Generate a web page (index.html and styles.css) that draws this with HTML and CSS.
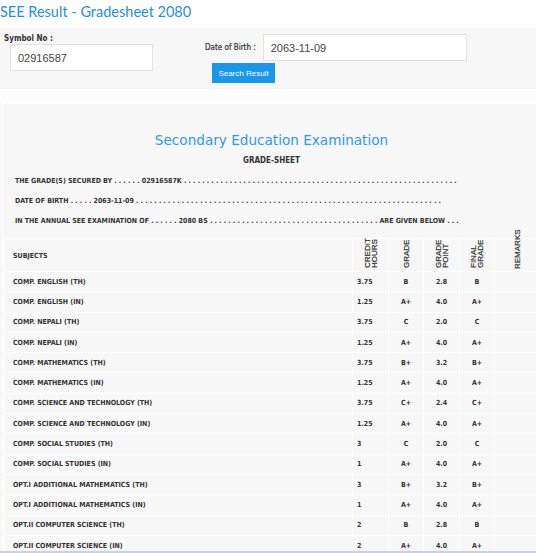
FILE: index.html
```html
<!DOCTYPE html>
<html lang="en">
<head>
<meta charset="utf-8">
<title>SEE Result - Gradesheet 2080</title>
<link rel="stylesheet" href="styles.css">
</head>
<body>
<h1 class="page-title">SEE Result - Gradesheet 2080</h1>
<form class="search-panel">
  <div class="field symbol">
    <label class="label">Symbol No :</label>
    <input class="input input-symbol" type="text" value="02916587">
  </div>
  <div class="field dob">
    <div class="dob-row">
      <label class="label">Date of Birth :</label>
      <input class="input input-dob" type="text" value="2063-11-09">
    </div>
    <button class="btn" type="button">Search Result</button>
  </div>
</form>
<div class="spacer"></div>
<section class="sheet">
  <h2 class="sheet-title">Secondary Education Examination</h2>
  <h3 class="sheet-sub">GRADE-SHEET</h3>
  <p class="info">THE GRADE(S) SECURED BY . . . . . . 02916587K . . . . . . . . . . . . . . . . . . . . . . . . . . . . . . . . . . . . . . . . . . . . . . . . . . . . . . . . . . . .</p>
  <p class="info">DATE OF BIRTH . . . . . 2063-11-09 . . . . . . . . . . . . . . . . . . . . . . . . . . . . . . . . . . . . . . . . . . . . . . . . . . . . . . . . . . . . . . . . . . .</p>
  <p class="info">IN THE ANNUAL SEE EXAMINATION OF . . . . . . 2080 BS . . . . . . . . . . . . . . . . . . . . . . . . . . . . . . . . . . . . . ARE GIVEN BELOW . . .</p>
  <table class="grades">
    <colgroup>
      <col class="c-sub"><col class="c-num"><col class="c-num2"><col class="c-num"><col class="c-num2"><col class="c-rem">
    </colgroup>
    <thead>
      <tr>
        <th class="th-sub">SUBJECTS</th>
        <th><span class="vert">CREDIT<br>HOURS</span></th>
        <th><span class="vert">GRADE</span></th>
        <th><span class="vert">GRADE<br>POINT</span></th>
        <th><span class="vert">FINAL<br>GRADE</span></th>
        <th><span class="vert rem">REMARKS</span></th>
      </tr>
    </thead>
    <tbody>
      <tr><td>COMP. ENGLISH (TH)</td><td class="ch">3.75</td><td>B</td><td>2.8</td><td>B</td><td></td></tr>
      <tr><td>COMP. ENGLISH (IN)</td><td class="ch">1.25</td><td>A+</td><td>4.0</td><td>A+</td><td></td></tr>
      <tr><td>COMP. NEPALI (TH)</td><td class="ch">3.75</td><td>C</td><td>2.0</td><td>C</td><td></td></tr>
      <tr><td>COMP. NEPALI (IN)</td><td class="ch">1.25</td><td>A+</td><td>4.0</td><td>A+</td><td></td></tr>
      <tr><td>COMP. MATHEMATICS (TH)</td><td class="ch">3.75</td><td>B+</td><td>3.2</td><td>B+</td><td></td></tr>
      <tr><td>COMP. MATHEMATICS (IN)</td><td class="ch">1.25</td><td>A+</td><td>4.0</td><td>A+</td><td></td></tr>
      <tr><td>COMP. SCIENCE AND TECHNOLOGY (TH)</td><td class="ch">3.75</td><td>C+</td><td>2.4</td><td>C+</td><td></td></tr>
      <tr><td>COMP. SCIENCE AND TECHNOLOGY (IN)</td><td class="ch">1.25</td><td>A+</td><td>4.0</td><td>A+</td><td></td></tr>
      <tr><td>COMP. SOCIAL STUDIES (TH)</td><td class="ch">3</td><td>C</td><td>2.0</td><td>C</td><td></td></tr>
      <tr><td>COMP. SOCIAL STUDIES (IN)</td><td class="ch">1</td><td>A+</td><td>4.0</td><td>A+</td><td></td></tr>
      <tr><td>OPT.I ADDITIONAL MATHEMATICS (TH)</td><td class="ch">3</td><td>B+</td><td>3.2</td><td>B+</td><td></td></tr>
      <tr><td>OPT.I ADDITIONAL MATHEMATICS (IN)</td><td class="ch">1</td><td>A+</td><td>4.0</td><td>A+</td><td></td></tr>
      <tr><td>OPT.II COMPUTER SCIENCE (TH)</td><td class="ch">2</td><td>B</td><td>2.8</td><td>B</td><td></td></tr>
      <tr><td>OPT.II COMPUTER SCIENCE (IN)</td><td class="ch">2</td><td>A+</td><td>4.0</td><td>A+</td><td></td></tr>
    </tbody>
  </table>
</section>
<div class="window-edge"></div>
</body>
</html>
```
FILE: styles.css
```css
html, body {
  margin: 0;
  padding: 0;
  background: #ffffff;
  overflow: hidden;
}
body {
  font-family: "Liberation Sans", Arial, sans-serif;
  color: #333;
}
.page-title {
  margin: 0;
  height: 28px;
  padding: 3px 0 0 0;
  box-sizing: border-box;
  font-family: Lato, "DejaVu Sans", sans-serif;
  font-weight: normal;
  font-size: 14.5px;
  color: #1f8fe6;
  line-height: 18px;
}
.search-panel {
  margin: 0;
  height: 61px;
  background: #f7f7f7;
  display: flex;
  padding: 0 0 0 4px;
  box-sizing: border-box;
}
.label {
  font-family: "DejaVu Sans Condensed", "DejaVu Sans", sans-serif;
  font-weight: bold;
  font-size: 8px;
  color: #333;
}
.field.symbol {
  width: 201px;
  padding-top: 6px;
  display: flex;
  flex-direction: column;
  align-items: flex-start;
}
.field.symbol .label {
  line-height: 10px;
  height: 10px;
}
.input {
  font-family: "Liberation Sans", Arial, sans-serif;
  font-size: 11px;
  color: #444;
  background: #fff;
  border: 1px solid #e2e2da;
  box-sizing: border-box;
  height: 27px;
  padding: 0 0 0 7px;
  margin: 0;
  outline: none;
}
.input-symbol {
  width: 143px;
  margin: 0 0 0 6px;
}
.field.dob {
  padding-top: 6px;
  display: flex;
  flex-direction: column;
  align-items: flex-start;
}
.dob-row {
  display: flex;
  align-items: center;
  gap: 7px;
}
.dob-row .label {
  font-weight: normal;
  -webkit-text-stroke: 0.2px #333;
}
.input-dob {
  width: 204px;
}
.btn {
  margin: 2px 0 0 7px;
  width: 63px;
  height: 20px;
  border: none;
  background: #1a96ea;
  color: #fff;
  font-family: "Liberation Sans", Arial, sans-serif;
  font-size: 8px;
  padding: 0;
}
.spacer {
  height: 14px;
  background: #fdfdfd;
}
.sheet {
  margin-left: 2px;
  width: 538px;
  background: #f7f7f7;
  border: 1px solid #ffffff;
  box-sizing: border-box;
  padding: 27px 0 0 1px;
  box-shadow: -2px 0 0 #f7f7f7;
}
.sheet-title {
  margin: 0;
  text-align: center;
  font-family: "DejaVu Sans", sans-serif;
  font-weight: normal;
  font-size: 13.6px;
  line-height: 18px;
  color: #2a9af0;
}
.sheet-sub {
  margin: 7px 0 0;
  text-align: center;
  font-family: "DejaVu Sans Condensed", "DejaVu Sans", sans-serif;
  font-weight: bold;
  font-size: 8px;
  line-height: 10px;
  color: #333;
}
.info {
  margin: 0;
  padding-left: 11px;
  font-family: "DejaVu Sans Condensed", "DejaVu Sans", sans-serif;
  font-size: 7px;
  line-height: 10px;
  color: #333;
  white-space: nowrap;
  font-weight: bold;
}
.info:first-of-type { margin-top: 10px; }
.info + .info { margin-top: 10px; }
.grades {
  margin-top: 12px;
  border-collapse: collapse;
  width: 536px;
  table-layout: fixed;
  font-family: "DejaVu Sans Condensed", "DejaVu Sans", sans-serif;
  font-size: 7px;
  color: #333;
}
.c-sub { width: 348px; }
.c-num { width: 36px; }
.c-num2 { width: 35px; }
.c-rem { width: 46px; }
.grades th, .grades td {
  border: 1px solid #ffffff;
  padding: 0;
  font-weight: bold;
}
.grades thead tr { height: 30px; }
.grades tbody tr { height: 20.3px; }
.grades td:first-child, .grades th.th-sub {
  text-align: left;
  padding-left: 8px;
}
.grades td { text-align: center; }
.grades td.ch { text-align: left; padding-left: 4px; }
.grades th {
  vertical-align: middle;
}
.grades th.th-sub {
  padding-top: 2px;
}
.vert {
  display: inline-block;
  writing-mode: vertical-rl;
  transform: rotate(180deg);
  font-family: "Liberation Sans", Arial, sans-serif;
  font-weight: normal;
  font-size: 8px;
  line-height: 7px;
  -webkit-text-stroke: 0.2px #333;
  text-align: left;
  height: 27px;
}
.vert.rem {
  height: 34px;
  margin-top: -4px;
}
.window-edge {
  position: fixed;
  left: 0;
  right: 0;
  bottom: 0;
  height: 2px;
  background: #c8d2e0;
}
```
